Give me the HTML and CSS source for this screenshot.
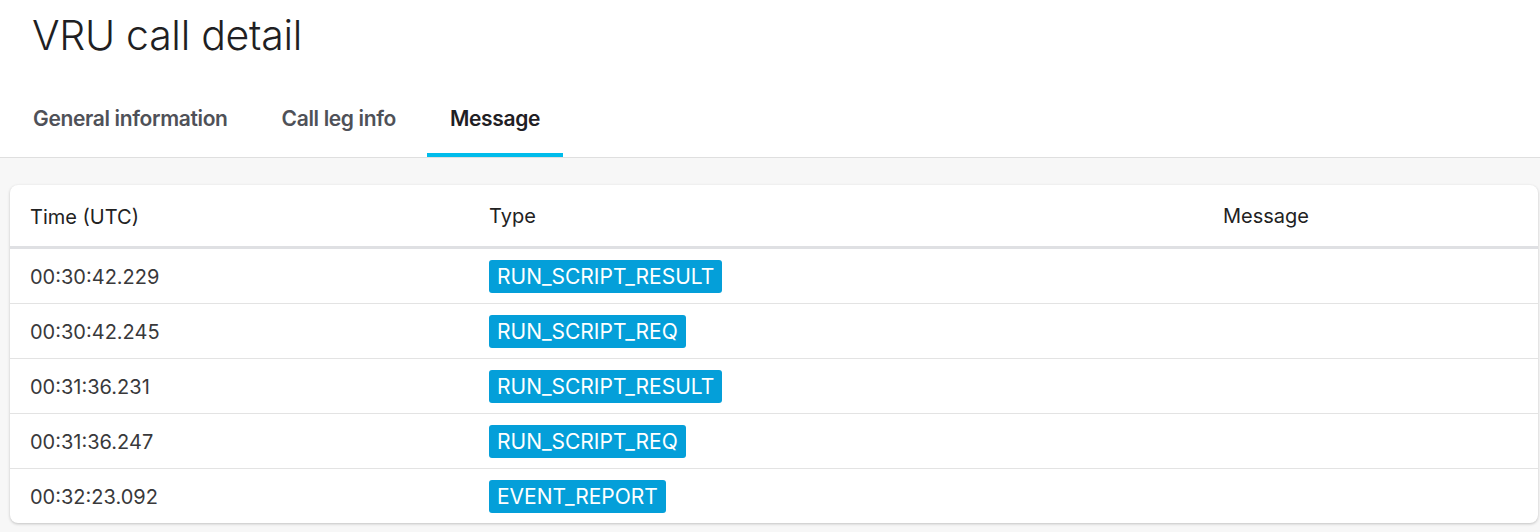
FILE: index.html
```html
<!DOCTYPE html>
<html>
<head>
<meta charset="utf-8">
<link rel="stylesheet" href="styles.css">
</head>
<body>
<div class="top">
  <h1 class="title">VRU call detail</h1>
  <nav class="tabs">
    <div class="tab">General information</div>
    <div class="tab">Call leg info</div>
    <div class="tab active">Message</div>
  </nav>
</div>
<main class="content">
  <div class="card">
    <div class="row head">
      <div class="c1">Time (UTC)</div>
      <div class="c2">Type</div>
      <div class="c3">Message</div>
    </div>
    <div class="row">
      <div class="c1">00:30:42.229</div>
      <div class="c2"><span class="badge">RUN_SCRIPT_RESULT</span></div>
      <div class="c3"></div>
    </div>
    <div class="row">
      <div class="c1">00:30:42.245</div>
      <div class="c2"><span class="badge">RUN_SCRIPT_REQ</span></div>
      <div class="c3"></div>
    </div>
    <div class="row">
      <div class="c1">00:31:36.231</div>
      <div class="c2"><span class="badge">RUN_SCRIPT_RESULT</span></div>
      <div class="c3"></div>
    </div>
    <div class="row">
      <div class="c1">00:31:36.247</div>
      <div class="c2"><span class="badge">RUN_SCRIPT_REQ</span></div>
      <div class="c3"></div>
    </div>
    <div class="row last">
      <div class="c1">00:32:23.092</div>
      <div class="c2"><span class="badge">EVENT_REPORT</span></div>
      <div class="c3"></div>
    </div>
  </div>
</main>
</body>
</html>
```
FILE: styles.css
```css
html, body {
  margin: 0;
  padding: 0;
  background: #f7f7f7;
  font-family: Inter, "Open Sans", "Liberation Sans", sans-serif;
  color: #222;
}
.top {
  background: #fff;
  border-bottom: 1px solid #dfdfdf;
}
.title {
  margin: 0;
  padding: 10px 0 0 32px;
  height: 70px;
  box-sizing: border-box;
  font-size: 41px;
  font-weight: 300;
  line-height: 50px;
  color: #1f1f23;
  letter-spacing: -0.3px;
}
.tabs {
  display: flex;
  gap: 8px;
  padding-left: 10px;
  height: 87px;
  align-items: stretch;
}
.tab {
  padding: 14px 23px 0;
  display: flex;
  align-items: center;
  font-size: 21px;
  font-weight: 600;
  color: #4f5158;
  border-bottom: 4px solid transparent;
  letter-spacing: -0.35px;
}
.tab.active {
  color: #1f2024;
  border-bottom-color: #00bceb;
}
.content {
  padding: 27px 2px 10px 10px;
}
.card {
  background: #fff;
  border-radius: 8px;
  box-shadow: 0 1px 3px rgba(0,0,0,0.22);
  overflow: hidden;
}
.row {
  display: flex;
  align-items: center;
  height: 54px;
  border-bottom: 1px solid #e3e3e3;
  font-size: 20px;
  color: #39393b;
}
.row.head {
  height: 61px;
  border-bottom: 3px solid #dfe0e3;
  color: #222;
}
.row.last {
  border-bottom: none;
  height: 54px;
}
.c1 {
  width: 459px;
  padding: 2px 0 0 20px;
  box-sizing: border-box;
}
.c2 {
  width: 734px;
  padding-left: 20px;
  box-sizing: border-box;
}
.c3 {
  flex: 1;
  padding-left: 20px;
}
.badge {
  display: inline-block;
  background: #049fd9;
  color: #fff;
  border-radius: 3px;
  padding: 0 8px;
  height: 33px;
  line-height: 33px;
  font-size: 21px;
  margin-top: 1px;
}
```
